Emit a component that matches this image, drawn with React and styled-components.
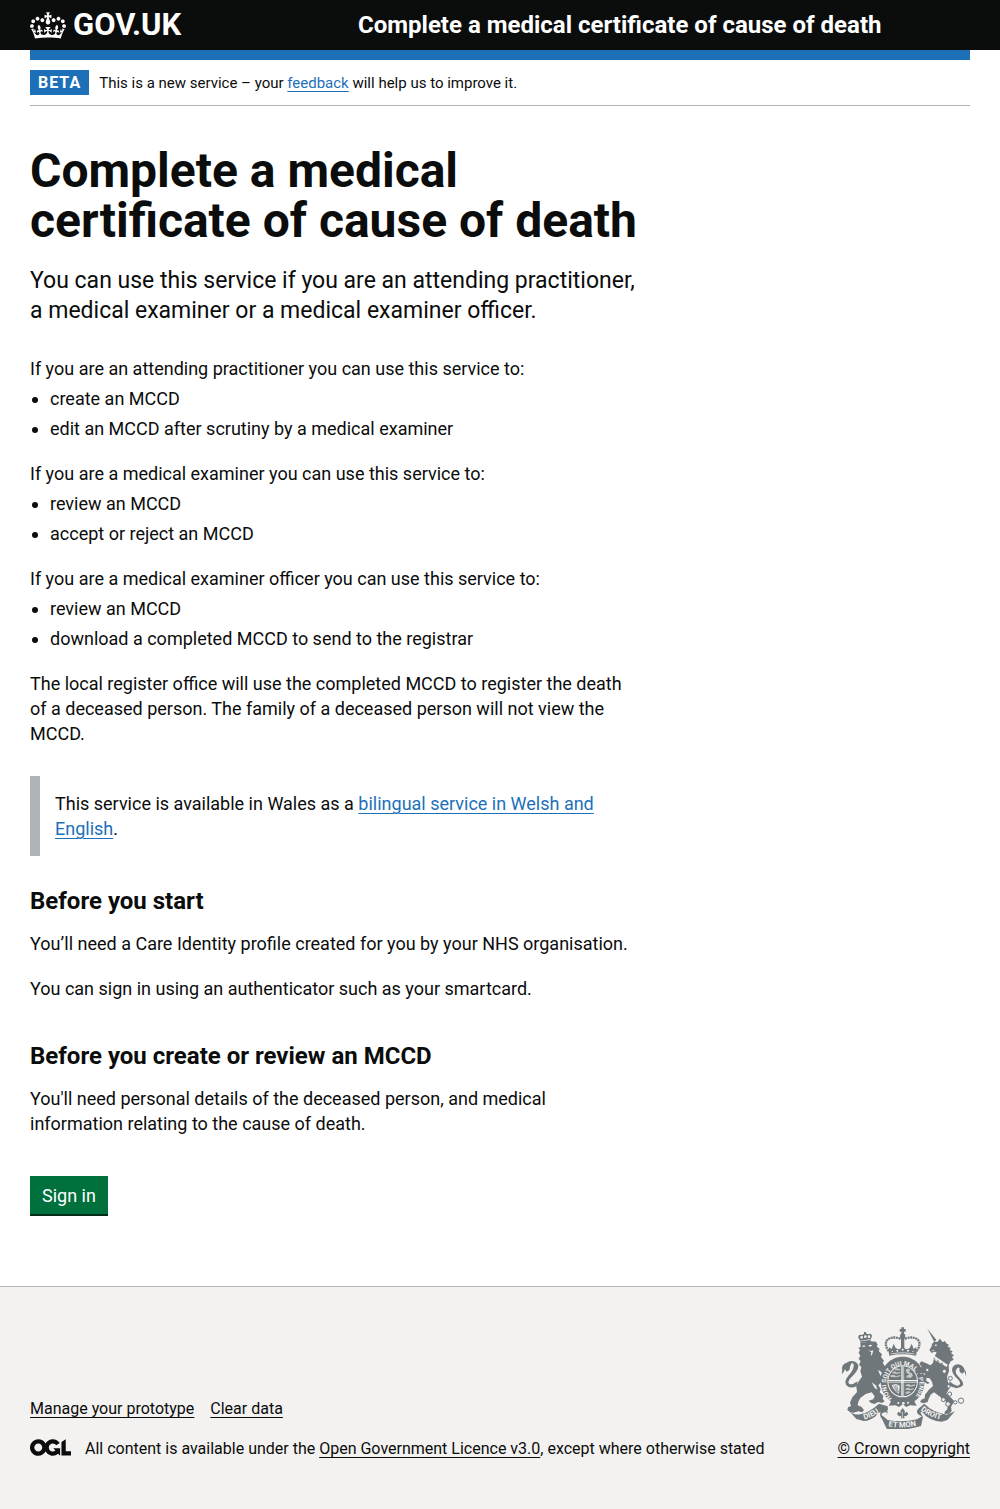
import React from "react";
import styled, { createGlobalStyle } from "styled-components";

const GlobalStyle = createGlobalStyle`
  *, *::before, *::after { box-sizing: border-box; }
  body {
    margin: 0;
    background: #f3f2f1;
    color: #0b0c0c;
    font-family: Roboto, "Liberation Sans", Arial, sans-serif;
    font-size: 18px;
    line-height: 25px;
  }
`;

const Template = styled.div`
  background: #ffffff;
`;

const Container = styled.div`
  max-width: 960px;
  margin: 0 30px;

  @media (min-width: 1020px) {
    margin: 0 auto;
  }
`;

const Header = styled.header`
  background: #0b0c0c;
  color: #ffffff;
`;

const HeaderRow = styled(Container)`
  display: grid;
  grid-template-columns: 1fr 2fr;
  align-items: center;
  gap: 10px;
  min-height: 50px;

  @media (max-width: 760px) {
    grid-template-columns: 1fr;
    padding: 10px 0;
  }
`;

const HomeLink = styled.a`
  display: flex;
  align-items: center;
  gap: 7px;
  color: inherit;
  text-decoration: none;
  font-size: 31px;
  line-height: 30px;
  font-weight: 700;
`;

const ServiceLink = styled.a`
  padding-left: 8px;
  color: inherit;
  text-decoration: none;
  font-size: 24px;
  line-height: 30px;
  font-weight: 700;
`;

const AccentBar = styled(Container)`
  border-top: 10px solid #1d70b8;
`;

const PhaseBanner = styled(Container)`
  display: flex;
  align-items: center;
  gap: 10px;
  padding: 10px 0;
  border-bottom: 1px solid #b1b4b6;
  font-size: 15px;
  line-height: 20px;
`;

const Tag = styled.strong`
  padding: 0 8px;
  background: #1d70b8;
  color: #ffffff;
  font-size: 16px;
  line-height: 25px;
  letter-spacing: 1px;
`;

const Link = styled.a`
  color: ${(p) => (p.$muted ? "#0b0c0c" : "#1d70b8")};
  text-decoration: underline;
  text-decoration-thickness: 1px;
  text-underline-offset: 3px;
`;

const Main = styled.main`
  padding: 40px 0 70px;
`;

const TwoThirds = styled.div`
  width: calc((100% + 30px) * 2 / 3 - 30px);

  @media (max-width: 640px) {
    width: 100%;
  }
`;

const Title = styled.h1`
  margin: 0 0 20px;
  font-size: 48px;
  line-height: 50px;
  font-weight: 700;
`;

const Lead = styled.p`
  margin: 0 0 30px;
  font-size: 23px;
  line-height: 30px;
`;

const Paragraph = styled.p`
  margin: 0 0 ${(p) => (p.$tight ? "5px" : "20px")};
`;

const BulletList = styled.ul`
  display: grid;
  gap: 5px;
  margin: 0 0 20px;
  padding-left: 20px;
`;

const Inset = styled.div`
  margin: 30px 0;
  padding: 15px;
  border-left: 10px solid #b1b4b6;
`;

const Heading = styled.h2`
  margin: 0 0 15px;
  padding-top: ${(p) => (p.$spaced ? "20px" : "0")};
  font-size: 24px;
  line-height: 30px;
  font-weight: 700;
`;

const StartButton = styled.button`
  display: block;
  margin: 40px 0 0;
  padding: 8px 12px 7px;
  border: 0;
  border-bottom: 2px solid #002d18;
  background: #00703c;
  color: #ffffff;
  font: inherit;
  line-height: 23px;
  cursor: pointer;
`;

const Footer = styled.footer`
  padding: 40px 0 50px;
  border-top: 1px solid #b1b4b6;
  background: #f3f2f1;
  font-size: 16px;
  line-height: 20px;
`;

const FooterRow = styled(Container)`
  display: flex;
  flex-wrap: wrap;
  align-items: flex-end;
  justify-content: space-between;
  gap: 30px;
`;

const FooterLinks = styled.ul`
  display: flex;
  flex-wrap: wrap;
  gap: 5px 16px;
  margin: 0 0 20px;
  padding: 0;
  list-style: none;
`;

const Licence = styled.div`
  display: flex;
  align-items: flex-start;
  gap: 14px;
`;

const Copyright = styled.a`
  display: flex;
  flex-direction: column;
  align-items: center;
  gap: 10px;
  color: #0b0c0c;
  text-decoration: underline;
  text-decoration-thickness: 1px;
  text-underline-offset: 3px;
`;

function CrownLogo() {
  return (
    <svg width="36" height="27" viewBox="0 0 132 97" fill="currentColor" aria-hidden="true">
      <path d="M25 30.2c3.5 1.5 7.7-.2 9.1-3.7 1.5-3.6-.2-7.8-3.9-9.2-3.6-1.4-7.6.3-9.1 3.9-1.4 3.5.3 7.5 3.9 9zM9 39.5c3.6 1.5 7.8-.2 9.2-3.7 1.5-3.6-.2-7.8-3.9-9.1-3.6-1.5-7.6.2-9.1 3.8-1.4 3.5.3 7.5 3.8 9zM4.4 57.2c3.5 1.5 7.7-.2 9.1-3.8 1.5-3.6-.2-7.7-3.9-9.1-3.5-1.5-7.6.3-9.1 3.8-1.4 3.5.3 7.6 3.9 9.1zm38.3-21.4c3.5 1.5 7.7-.2 9.1-3.8 1.5-3.6-.2-7.7-3.9-9.1-3.6-1.5-7.6.3-9.1 3.8-1.3 3.6.4 7.7 3.9 9.1zm64.4-5.6c-3.6 1.5-7.8-.2-9.1-3.7-1.5-3.6.2-7.8 3.8-9.2 3.6-1.4 7.7.3 9.2 3.9 1.3 3.5-.4 7.5-3.9 9zm15.9 9.3c-3.6 1.5-7.7-.2-9.1-3.7-1.5-3.6.2-7.8 3.7-9.1 3.6-1.5 7.7.2 9.2 3.8 1.5 3.5-.3 7.5-3.8 9zm4.7 17.7c-3.6 1.5-7.8-.2-9.2-3.8-1.5-3.6.2-7.7 3.9-9.1 3.6-1.5 7.7.3 9.2 3.8 1.3 3.5-.4 7.6-3.9 9.1zM89.3 35.8c-3.6 1.5-7.8-.2-9.2-3.8-1.4-3.6.2-7.7 3.9-9.1 3.6-1.5 7.7.3 9.2 3.8 1.4 3.6-.3 7.7-3.9 9.1zM69.7 17.7l8.9 4.7V9.3l-8.9 2.8c-.2-.3-.5-.6-.9-.9L72.4 0H59.6l3.5 11.2c-.3.3-.6.5-.9.9l-8.8-2.8v13.1l8.8-4.7c.3.3.6.7.9.9l-5 15.4v.1c-.2.8-.4 1.6-.4 2.4 0 4.1 3.1 7.5 7 8.1h.2c.3 0 .7.1 1 .1.4 0 .7 0 1-.1h.2c4-.6 7.1-4.1 7.1-8.1 0-.8-.1-1.7-.4-2.4V34l-5.1-15.4c.4-.2.7-.6 1-.9zM66 92.8c16.9 0 32.8 1.1 47.1 3.2 4-16.9 8.9-26.7 14-33.5l-9.6-3.4c1 4.9 1.1 7.2 0 10.2-1.5-1.4-3-4.3-4.2-8.7L108.6 76c2.8-2 5-3.2 7.5-3.3-4.4 9.4-10 11.9-13.6 11.2-4.3-.8-6.3-4.6-5.6-7.9 1-4.7 5.7-5.9 8-.5 4.3-8.7-3-11.4-7.6-8.8 7.1-7.2 7.9-13.5 2.1-21.1-8 6.1-8.1 12.3-4.5 20.8-4.7-5.4-12.1-2.5-9.5 6.2 3.4-5.2 7.9-2 7.2 3.1-.6 4.3-6.4 7.8-13.5 7.2-10.3-.9-10.9-8-11.2-13.8 2.5-.5 7.1 1.8 11 7.3L80.2 60c-4.1 4.4-8 5.3-12.3 5.4 1.4-4.4 8-11.6 8-11.6H55.5s6.4 7.2 7.9 11.6c-4.2-.1-8-1-12.3-5.4l1.4 16.4c3.9-5.5 8.5-7.7 10.9-7.3-.3 5.8-.9 12.8-11.1 13.8-7.2.6-12.9-2.9-13.5-7.2-.7-5 3.8-8.3 7.1-3.1 2.7-8.7-4.6-11.6-9.4-6.2 3.7-8.5 3.6-14.7-4.6-20.8-5.8 7.6-5 13.9 2.2 21.1-4.7-2.6-11.9.1-7.7 8.8 2.3-5.5 7.1-4.2 8.1.5.7 3.3-1.3 7.1-5.7 7.9-3.5.7-9-1.8-13.5-11.2 2.5.1 4.7 1.3 7.5 3.3l-4.7-15.4c-1.2 4.4-2.7 7.2-4.3 8.7-1.1-3-.9-5.3 0-10.2l-9.5 3.4c5 6.9 9.9 16.7 14 33.5 14.8-2.1 30.8-3.2 47.7-3.2z" />
    </svg>
  );
}

function OglLogo() {
  return (
    <svg width="41" height="17" viewBox="0 0 483.2 195.7" fill="currentColor" aria-hidden="true">
      <path d="M421.5 142.8V.1l-50.7 32.3v161.1h112.4v-50.7zm-122.3-9.6A47.12 47.12 0 0 1 221 97.8c0-26 21.1-47.1 47.1-47.1 16.7 0 31.4 8.7 39.7 21.8l42.7-27.2A97.63 97.63 0 0 0 268.1 0c-36.5 0-68.3 20.1-85.1 49.7A98 98 0 0 0 97.8 0C43.9 0 0 43.9 0 97.8s43.9 97.8 97.8 97.8c36.5 0 68.3-20.1 85.1-49.7a97.76 97.76 0 0 0 149.6 25.4l19.4 22.2h3v-87.8h-80l24.3 27.5zM97.8 145c-26 0-47.1-21.1-47.1-47.1s21.1-47.1 47.1-47.1 47.1 21.1 47.1 47.1S123.8 145 97.8 145" />
    </svg>
  );
}

const ink = "#6f777b";
const paper = "#f3f2f1";

function RoyalArms() {
  return (
    <svg width="125" height="102" viewBox="50 36 375 306" fill={ink} aria-hidden="true">
      <defs>
        <path id="garter" d="M203 250A50 56 0 1 1 270 248" />
        <path id="mottoLeft" d="M120 313Q148 307 178 282" />
        <path id="mottoMid" d="M192 334Q235 342 284 331" />
        <path id="mottoRight" d="M289 286Q317 308 362 316" />
      </defs>

      {/* lion */}
      <path d="M119 51H125V55L131 58Q143 53 143 64L138 75L140 80L109 84L108 78L102 68Q101 57 113 60L119 56Z" />
      <g fill={paper}>
        <circle cx="112" cy="67" r="4" /><circle cx="123" cy="65" r="4" /><circle cx="134" cy="65" r="4" />
        <path d="M109 77L137 73V75L110 79Z" />
      </g>
      <path d="M108 84L140 79L155 80L160 89L157 94L166 102L163 108L173 118L170 126L179 137L175 144L184 157L180 162L188 176L183 183L190 194L182 200L186 208L178 212L169 203L162 211L169 222L166 232L177 242L175 252L181 259L173 264L162 261L150 267L140 264L133 257L147 253L151 244L142 232L124 237L108 249L102 260L100 271L111 275L119 285L114 292L102 289L88 293L77 291L69 285L71 277L80 273L77 263L84 247L98 231L96 214L103 199L113 185L108 169L111 156L104 149L109 139L103 131L108 122L103 113L107 104L102 98L109 96Z" />
      <g fill={paper}>
        <path d="M113 93L120 91L124 94L117 96ZM132 91L140 89L144 92L136 95Z" />
        <path d="M132 105L139 108L147 106L144 117L139 124L141 112Z" />
        <path d="M161 164L171 171L179 187L174 190L166 177Z" />
        <path d="M142 202L154 211L160 224L151 219Z" />
      </g>
      <path d="M99 212Q78 224 66 211Q58 200 72 182Q90 162 88 149Q86 142 82 145Q75 154 76 163Q67 177 62 162Q59 174 52 178Q55 166 53 158Q56 146 66 144Q76 136 87 139Q99 141 102 152Q104 164 81 187Q67 201 75 207Q84 211 99 199Z" />

      {/* imperial crown */}
      <path d="M231 37H239V42H244V50H239V58H231V50H226V42H231Z" />
      <circle cx="235" cy="63" r="8" />
      <path d="M230 66H240V98L244 108H226L230 98Z" />
      <g fill="none" stroke={ink} strokeWidth="7" strokeDasharray="6 2">
        <path d="M229 71Q201 62 188 76Q179 88 193 108" />
        <path d="M241 71Q269 62 282 76Q291 88 277 108" />
      </g>
      <path d="M195 97L202 102L208 86L214 99L221 103L229 101L235 90L241 101L249 103L256 99L262 86L268 102L275 97L278 106L275 122Q235 114 195 122L192 106Z" />
      <g fill={paper}>
        <circle cx="204" cy="109" r="2" /><circle cx="219" cy="107" r="3" />
        <circle cx="235" cy="104" r="3" /><circle cx="251" cy="107" r="3" /><circle cx="266" cy="109" r="2" />
        <path d="M199 116Q235 109 271 116V118Q235 112 199 118Z" />
      </g>

      {/* garter and shield */}
      <path d="M235 125C274 125 301 157 301 198C301 225 288 248 270 259L277 272L257 271L246 276L235 268L224 276L213 271L193 272L200 259C182 248 169 225 169 198C169 157 196 125 235 125Z" />
      <ellipse cx="235" cy="199" rx="46" ry="48" fill={paper} />
      <ellipse cx="235" cy="199" rx="43" ry="45" />
      <g fill={paper} opacity="0.65">
        <path d="M204 172L212 169L218 173L228 170V174L217 177L204 175ZM199 181L208 179L215 183L228 180V184L214 187L198 186ZM212 162L218 160L228 163V166L212 166Z" />
        <path d="M244 164L252 160L258 165L254 171L262 174L266 182L258 190L250 187L245 190L248 181L256 179L247 174Z" />
        <path d="M244 209L253 207L260 211L272 208V212L259 215L244 213ZM244 220L252 218L260 222L268 219V223L259 226L244 224ZM244 231L252 229L260 231L252 236H244Z" />
      </g>
      <path d="M202 210L216 207L226 212L224 236L215 230Q205 221 202 210Z" fill={paper} />
      <path d="M207 211L218 231M212 210L220 232M217 209L222 232" stroke={ink} strokeWidth="2" />
      <path d="M233 154V244M192 197H278" stroke={paper} strokeWidth="4" />
      <path d="M238 154V244M192 202H278" stroke={paper} strokeWidth="2" />
      <g fill={paper}>
        <circle cx="222" cy="264" r="3" /><circle cx="237" cy="265" r="4" /><circle cx="251" cy="263" r="3" />
      </g>
      <text fill={paper} fontSize="19" fontWeight="700">
        <textPath href="#garter">HONI SOIT QUI MAL Y PENSE</textPath>
      </text>

      {/* unicorn */}
      <path d="M309 41L336 74L330 81Z" />
      <path d="M329 80L338 81L345 75L344 70L350 75L355 82L362 78L367 86L374 89L370 96L379 98L376 105L385 109L380 115L389 121L383 126L388 134L379 139L373 151L374 169L368 186L371 202L379 212L372 226L366 236L379 247L390 259L380 276L382 288L374 296L360 297L362 289L368 284L371 272L363 258L345 244L329 232L319 239L313 251L310 261L297 265L287 261L291 254L301 250L302 239L313 225L326 213L323 200L316 190L306 188L306 198L316 203L310 207L299 200L296 182L304 177L291 171L287 178L293 184L286 187L279 178L282 165L292 156L285 146L291 139L304 144L319 151L326 143L329 128L337 112L330 110L322 114L315 105L322 94L323 87Z" />
      <g fill={paper}>
        <path d="M331 90L336 88L338 92L333 93ZM320 107L331 104L329 107Z" />
        <path d="M328 121L370 149L367 156L322 130Z" />
        <path d="M310 143L316 133L323 145L315 149Z" />
      </g>
      <path d="M329 127L334 134L328 133ZM340 133L345 142L338 139ZM353 141L357 150L350 147Z" />
      <path d="M374 211Q399 228 416 211Q419 201 404 187Q386 172 400 158Q408 155 405 168Q415 183 420 168L425 184Q427 169 421 165Q417 151 403 148Q386 148 383 163Q383 179 402 194Q414 208 400 212Q388 211 376 198Z" />
      <g fill={paper} stroke={ink} strokeWidth="3">
        <circle cx="309" cy="165" r="5" /><circle cx="360" cy="169" r="6" /><circle cx="378" cy="190" r="6" />
        <circle cx="373" cy="214" r="5" /><circle cx="376" cy="237" r="6" /><circle cx="357" cy="254" r="6" />
        <circle cx="371" cy="267" r="7" /><circle cx="393" cy="262" r="5" /><circle cx="410" cy="257" r="8" />
      </g>

      {/* fleur and ribbons */}
      <path d="M235 279L242 289L240 295L248 290L252 298L245 304L239 303L241 310H229L231 303L225 304L218 298L222 290L230 295L228 289Z" />
      <path d="M234 290V310" stroke={paper} strokeWidth="2" />
      <path d="M74 287Q91 302 108 298Q137 291 164 266L190 274L191 285L181 289Q164 288 154 304Q137 318 118 318L96 312Z" />
      <path d="M173 286L186 284Q194 291 186 299L177 304L190 315Q235 324 278 313L293 304L283 299Q273 291 282 281L300 266Q324 291 367 299L392 289L369 315L352 320Q313 317 293 290L288 292L296 306L290 333Q235 350 187 341L173 312Q161 296 173 286Z" />
      <path d="M176 293Q165 299 180 305Q191 298 186 291Z" fill={paper} />
      <g fill={paper} fontWeight="700" fontSize="23">
        <text><textPath href="#mottoLeft">DIEU</textPath></text>
        <text><textPath href="#mottoMid">ET MON</textPath></text>
        <text><textPath href="#mottoRight">DROIT</textPath></text>
      </g>
    </svg>
  );
}

const uses = [
  {
    who: "If you are an attending practitioner you can use this service to:",
    items: ["create an MCCD", "edit an MCCD after scrutiny by a medical examiner"],
  },
  {
    who: "If you are a medical examiner you can use this service to:",
    items: ["review an MCCD", "accept or reject an MCCD"],
  },
  {
    who: "If you are a medical examiner officer you can use this service to:",
    items: ["review an MCCD", "download a completed MCCD to send to the registrar"],
  },
];

export default function App() {
  return (
    <Template>
      <GlobalStyle />
      <Header>
        <HeaderRow>
          <HomeLink href="#">
            <CrownLogo />
            <span>GOV.UK</span>
          </HomeLink>
          <ServiceLink href="#">Complete a medical certificate of cause of death</ServiceLink>
        </HeaderRow>
      </Header>
      <AccentBar />
      <PhaseBanner>
        <Tag>BETA</Tag>
        <span>
          This is a new service – your <Link href="#">feedback</Link> will help us to improve it.
        </span>
      </PhaseBanner>

      <Container>
        <Main>
          <TwoThirds>
            <Title>Complete a medical certificate of cause of death</Title>
            <Lead>
              You can use this service if you are an attending practitioner, a medical examiner or a
              medical examiner officer.
            </Lead>
            {uses.map((use) => (
              <React.Fragment key={use.who}>
                <Paragraph $tight>{use.who}</Paragraph>
                <BulletList>
                  {use.items.map((item) => (
                    <li key={item}>{item}</li>
                  ))}
                </BulletList>
              </React.Fragment>
            ))}
            <Paragraph>
              The local register office will use the completed MCCD to register the death of&nbsp;a
              deceased person. The family of a deceased person will not view the MCCD.
            </Paragraph>
            <Inset>
              This service is available in Wales as a{" "}
              <Link href="#">bilingual service in Welsh and English</Link>.
            </Inset>
            <Heading>Before you start</Heading>
            <Paragraph>
              You’ll need a Care Identity profile created for you by your NHS organisation.
            </Paragraph>
            <Paragraph>You can sign in using an authenticator such as your smartcard.</Paragraph>
            <Heading $spaced>Before you create or review an MCCD</Heading>
            <Paragraph>
              You'll need personal details of the deceased person, and medical
              information&nbsp;relating to the cause of death.
            </Paragraph>
            <StartButton type="button">Sign in</StartButton>
          </TwoThirds>
        </Main>
      </Container>

      <Footer>
        <FooterRow>
          <div>
            <FooterLinks>
              <li><Link $muted href="#">Manage your prototype</Link></li>
              <li><Link $muted href="#">Clear data</Link></li>
            </FooterLinks>
            <Licence>
              <OglLogo />
              <span>
                All content is available under the{" "}
                <Link $muted href="#">Open Government Licence v3.0</Link>, except where otherwise
                stated
              </span>
            </Licence>
          </div>
          <Copyright href="#">
            <RoyalArms />
            <span>© Crown copyright</span>
          </Copyright>
        </FooterRow>
      </Footer>
    </Template>
  );
}
